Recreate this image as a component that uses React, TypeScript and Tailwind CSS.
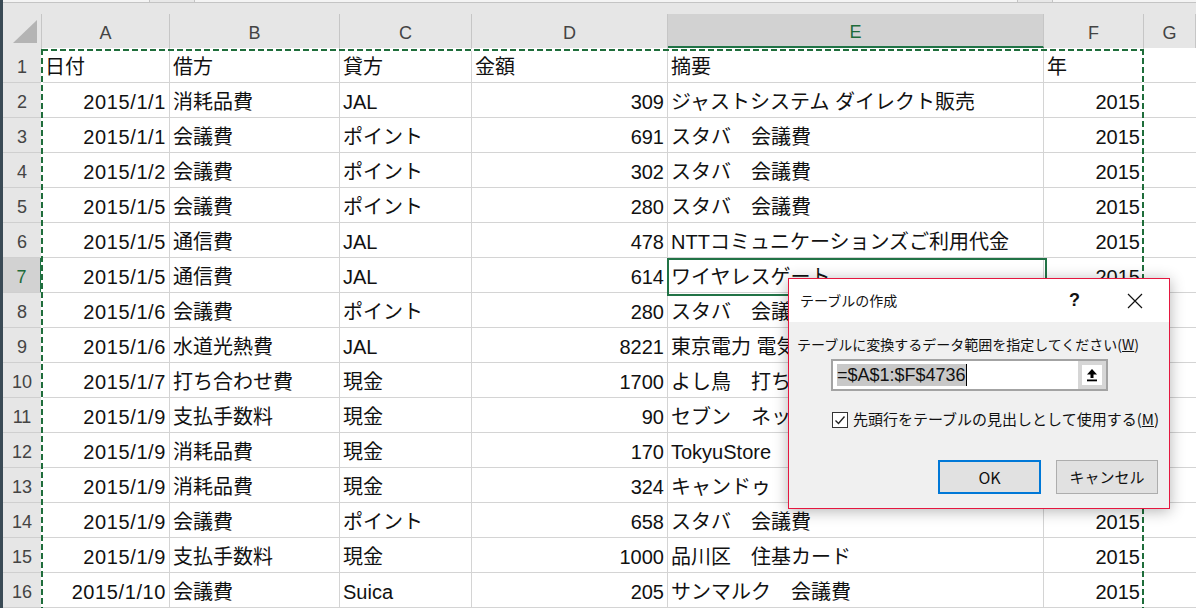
import React from 'react'

const columns = [
  { key: 'A', w: 'w-[128px]' },
  { key: 'B', w: 'w-[170px]' },
  { key: 'C', w: 'w-[132px]' },
  { key: 'D', w: 'w-[196px]' },
  { key: 'E', w: 'w-[376px]' },
  { key: 'F', w: 'w-[100px]' },
  { key: 'G', w: 'flex-1' },
]

// [date, debit, credit, amount, memo, year]
const rows: string[][] = [
  ['日付', '借方', '貸方', '金額', '摘要', '年'],
  ['2015/1/1', '消耗品費', 'JAL', '309', 'ジャストシステム ダイレクト販売', '2015'],
  ['2015/1/1', '会議費', 'ポイント', '691', 'スタバ　会議費', '2015'],
  ['2015/1/2', '会議費', 'ポイント', '302', 'スタバ　会議費', '2015'],
  ['2015/1/5', '会議費', 'ポイント', '280', 'スタバ　会議費', '2015'],
  ['2015/1/5', '通信費', 'JAL', '478', 'NTTコミュニケーションズご利用代金', '2015'],
  ['2015/1/5', '通信費', 'JAL', '614', 'ワイヤレスゲート', '2015'],
  ['2015/1/6', '会議費', 'ポイント', '280', 'スタバ　会議費', '2015'],
  ['2015/1/6', '水道光熱費', 'JAL', '8221', '東京電力 電気代', '2015'],
  ['2015/1/7', '打ち合わせ費', '現金', '1700', 'よし鳥　打ち合わせ', '2015'],
  ['2015/1/9', '支払手数料', '現金', '90', 'セブン　ネットプリント', '2015'],
  ['2015/1/9', '消耗品費', '現金', '170', 'TokyuStore', '2015'],
  ['2015/1/9', '消耗品費', '現金', '324', 'キャンドゥ', '2015'],
  ['2015/1/9', '会議費', 'ポイント', '658', 'スタバ　会議費', '2015'],
  ['2015/1/9', '支払手数料', '現金', '1000', '品川区　住基カード', '2015'],
  ['2015/1/10', '会議費', 'Suica', '205', 'サンマルク　会議費', '2015'],
]

const ANTS_H = 'bg-[repeating-linear-gradient(90deg,#1f6d3b_0_6px,#ffffff_6px_9px)]'
const ANTS_V = 'bg-[repeating-linear-gradient(180deg,#1f6d3b_0_6px,#ffffff_6px_9px)]'

function Cell({ value, colIdx, rowIdx }: { value: string; colIdx: number; rowIdx: number }) {
  const col = columns[colIdx]
  const isNumber = rowIdx > 0 && (colIdx === 0 || colIdx === 3 || colIdx === 5)
  return (
    <div
      className={`${col.w} flex shrink-0 items-center overflow-hidden whitespace-nowrap border-r border-b border-[#d4d4d4] px-[3px] pt-[4px] text-[20px] ${
        isNumber ? 'justify-end' : 'justify-start'
      } ${colIdx === 0 && rowIdx > 0 ? 'tracking-[0.6px]' : ''}`}
    >
      {value}
    </div>
  )
}

export default function App() {
  return (
    <div className="relative flex h-[608px] w-[1196px] overflow-hidden bg-white font-['Liberation_Sans','Noto_Sans_CJK_JP',sans-serif] text-[#111]">
      <div className="w-[3px] shrink-0 bg-[#3a4a55]" />

      <div className="flex min-w-0 flex-1 flex-col">
        {/* strip of the bar above the grid */}
        <div className="flex h-[3px] border-b border-[#c4c4c4] bg-[#f4f4f4]">
          <div className="w-[147px] border-r border-[#c4c4c4]" />
          <div className="w-[45px] border-r border-[#c4c4c4] bg-[#e8e8e8]" />
          <div className="w-[823px] border-r border-[#c4c4c4]" />
          <div className="w-[35px] border-r border-[#c4c4c4] bg-[#e8e8e8]" />
          <div className="flex-1" />
        </div>
        <div className="h-[12px] bg-[#e6e6e6]" />

        {/* column headers */}
        <div className="flex h-[35px] bg-[#e6e6e6]">
          <div className="flex w-[39px] shrink-0 items-end justify-end border-r border-[#c6c6c6] pr-[4px] pb-[5px]">
            <svg width="24" height="23" viewBox="0 0 24 23">
              <polygon points="24,0 24,23 0,23" fill="#b4b4b4" />
            </svg>
          </div>
          {columns.map((c) => (
            <div
              key={c.key}
              className={`${c.w} flex shrink-0 items-center justify-center border-r border-[#c6c6c6] pt-[4px] text-[18px] ${
                c.key === 'E'
                  ? 'border-b-2 border-b-[#217346] bg-[#d2d2d2] text-[#1e6b3a]'
                  : 'text-[#444]'
              }`}
            >
              {c.key}
            </div>
          ))}
        </div>

        {/* rows */}
        {rows.map((r, i) => (
          <div key={i} className="flex h-[35px] shrink-0">
            <div
              className={`flex w-[39px] shrink-0 items-center justify-center border-b border-[#cfcfcf] pt-[4px] text-[18px] ${
                i === 6
                  ? 'border-r-2 border-r-[#217346] bg-[#d2d2d2] text-[#1e6b3a]'
                  : 'border-r border-r-[#c6c6c6] bg-[#e6e6e6] text-[#444]'
              }`}
            >
              {i + 1}
            </div>
            {r.map((v, j) => (
              <Cell key={j} value={v} colIdx={j} rowIdx={i} />
            ))}
            <div className="flex-1 border-b border-[#d4d4d4]" />
          </div>
        ))}
      </div>

      {/* copy marquee */}
      <div className={`absolute left-[42px] top-[49px] h-[2px] w-[1102px] ${ANTS_H}`} />
      <div className={`absolute left-[41px] top-[49px] h-[560px] w-[2px] ${ANTS_V}`} />
      <div className={`absolute left-[1142px] top-[49px] h-[560px] w-[2px] ${ANTS_V}`} />

      {/* active cell E7 */}
      <div className="absolute left-[667px] top-[258px] h-[38px] w-[380px] border-2 border-[#217346]" />

      {/* Create Table dialog */}
      <div className="absolute left-[788px] top-[278px] flex h-[231px] w-[382px] flex-col border border-[#e5173f] bg-[#f0f0f0] font-['Noto_Sans_CJK_JP','Liberation_Sans',sans-serif] text-[#111] shadow-[0_2px_14px_rgba(0,0,0,0.3)]">
        <div className="flex h-[43px] shrink-0 items-center bg-white pl-[11px] pr-[26px]">
          <span className="text-[14px]">テーブルの作成</span>
          <span className="ml-auto font-['Liberation_Sans',sans-serif] text-[18px] font-bold">?</span>
          <svg className="ml-[47px]" width="16" height="16" viewBox="0 0 16 16">
            <path d="M1 1 L15 15 M15 1 L1 15" stroke="#111" strokeWidth="1.2" />
          </svg>
        </div>

        <div className="flex flex-1 flex-col">
          <div className="pl-[8px] pt-[12px] text-[14px] leading-[20px]">
            テーブルに変換するデータ範囲を指定してください(<span className="underline">W</span>)
          </div>

          <div className="ml-[42px] mt-[5px] flex h-[32px] w-[277px] border-2 border-[#a3a3a3] bg-white">
            <div className="flex flex-1 items-center pl-[4px] font-['Liberation_Sans',sans-serif]">
              <span className="bg-[#c8c8c8] text-[18px] leading-[22px]">=$A$1:$F$4736</span>
              <span className="h-[22px] w-px bg-black" />
            </div>
            <div className="flex w-[28px] items-center justify-center bg-[#d6d6d6]">
              <div className="flex h-[20px] w-[20px] items-center justify-center bg-white">
                <svg width="12" height="14" viewBox="0 0 12 14">
                  <polygon points="6,1 11,6.5 1,6.5" fill="#000" />
                  <rect x="4.5" y="6" width="3" height="4" fill="#000" />
                  <rect x="1" y="11.5" width="10" height="1.8" fill="#000" />
                </svg>
              </div>
            </div>
          </div>

          <div className="ml-[43px] mt-[20px] flex h-[17px] items-center">
            <div className="flex h-[16px] w-[16px] items-center justify-center border border-[#333] bg-white">
              <svg width="14" height="14" viewBox="0 0 14 14">
                <polyline points="2.5,7.5 5.5,10.5 11.5,3.5" fill="none" stroke="#222" strokeWidth="1.4" />
              </svg>
            </div>
            <span className="ml-[5px] text-[15px]">
              先頭行をテーブルの見出しとして使用する(<span className="underline">M</span>)
            </span>
          </div>

          <div className="mt-[32px] flex justify-end gap-[15px] pr-[11px]">
            <button className="flex h-[34px] w-[103px] items-center justify-center border-2 border-[#0078d7] bg-[#e1e1e1] text-[16px]">
              OK
            </button>
            <button className="flex h-[34px] w-[102px] items-center justify-center border border-[#adadad] bg-[#e1e1e1] text-[15px]">
              キャンセル
            </button>
          </div>
        </div>
      </div>
    </div>
  )
}
